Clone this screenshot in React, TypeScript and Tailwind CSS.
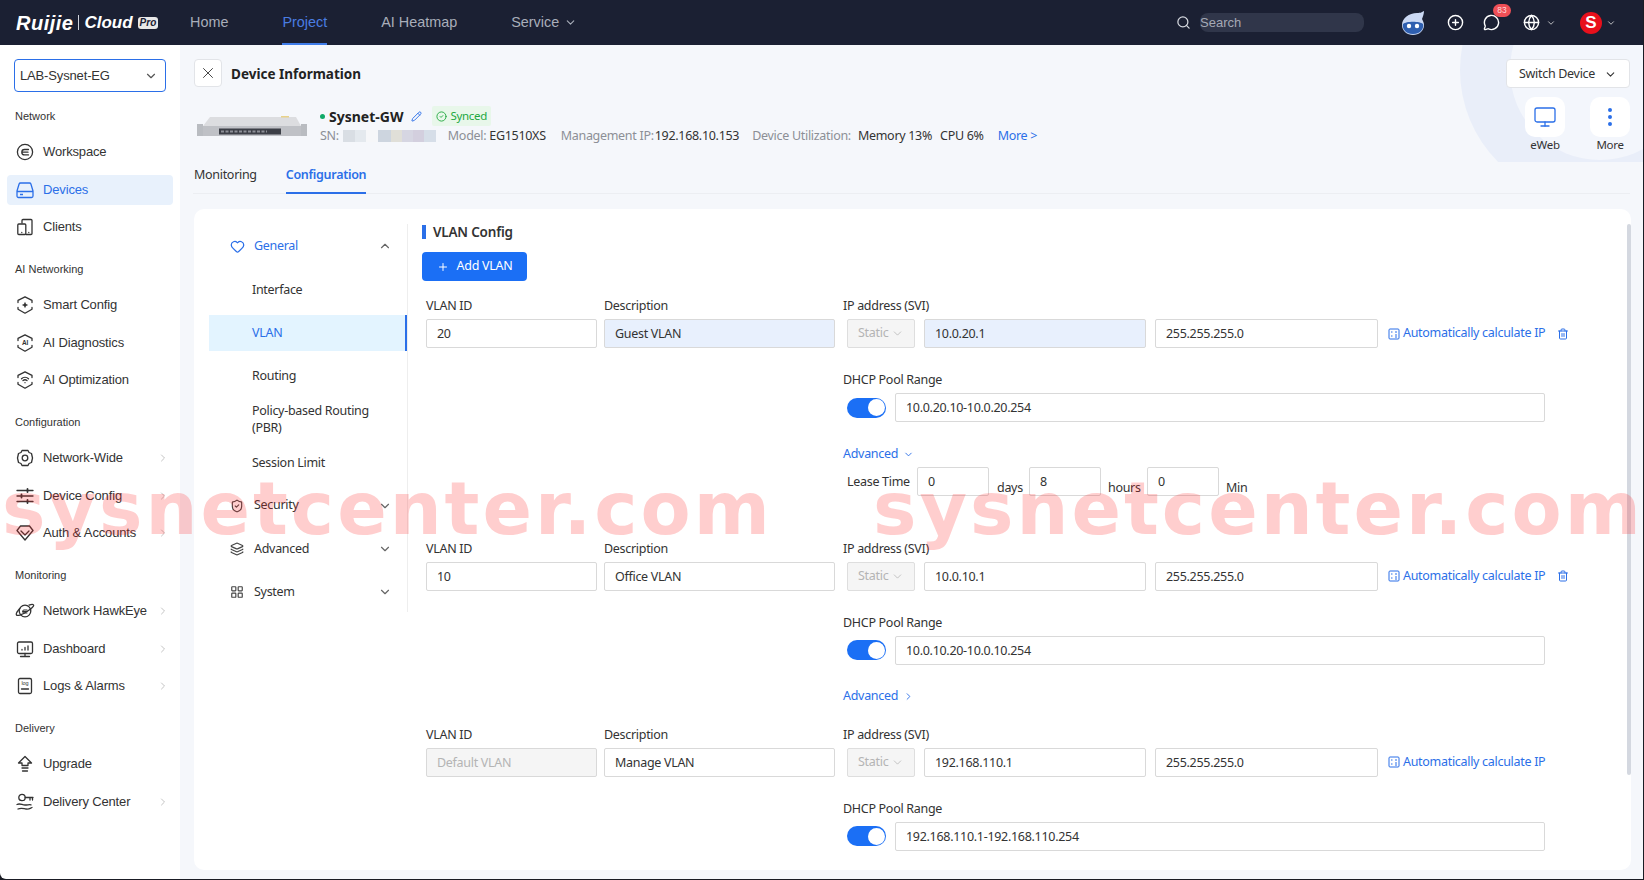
import React from "react";
import { X, ChevronDown, ChevronUp, ChevronRight, Search, Plus, Pencil, Trash2, EllipsisVertical, Monitor, CircleCheck, Heart, ShieldCheck, Layers, LayoutGrid, Globe, MessageCircle, CirclePlus } from "lucide-react";

const S = ({ children }: { children: React.ReactNode }) => (
  <svg viewBox="0 0 20 20" width="20" height="20" fill="none" stroke="#333" strokeWidth="1.3" strokeLinecap="round" strokeLinejoin="round">{children}</svg>
);
const Hex = () => <path d="M3 7.500V5.400l7-3.600 7 3.600v2.100M3 12.500v1.700l7 4 7-4v-1.700" />;
const icons: Record<string, React.ReactNode> = {
  Workspace: <S><circle cx="10" cy="10" r="7.600" /><path d="M13.500 7.500H9.500a2.700 2.700 0 0 0 0 5.400h4M7 10.200h6" /></S>,
  Devices: <svg viewBox="0 0 20 20" width="20" height="20" fill="none" stroke="#2b6fe8" strokeWidth="1.300" strokeLinejoin="round"><path d="M5.500 3h9a1.500 1.500 0 0 1 1.400 1L18 11v5a1.500 1.500 0 0 1-1.500 1.500h-13A1.500 1.500 0 0 1 2 16v-5l2.100-7a1.500 1.500 0 0 1 1.400-1zM2 11.500h16M5 14.500h3" /></svg>,
  Clients: <S><path d="M7 6V3.500A1 1 0 0 1 8 2.500h8a1 1 0 0 1 1 1v13a1 1 0 0 1-1 1h-5" /><rect x="2.800" y="7" width="8" height="10.500" rx="1" /><path d="M6.800 15.400v.2M13.800 15.400v.2" /></S>,
  "Smart Config": <S><Hex /><path d="M10 6.800l1 2.200 2.200 1-2.200 1-1 2.200-1-2.200-2.200-1 2.200-1z" fill="#333" stroke="none" /></S>,
  "AI Diagnostics": <S><Hex /><text x="10" y="12.300" fontSize="6.500" textAnchor="middle" fill="#333" stroke="none" fontFamily="Liberation Sans" fontWeight="700">AI</text></S>,
  "AI Optimization": <S><Hex /><path d="M6.500 8.800a5 5 0 0 1 7 0M8 10.600a3 3 0 0 1 4 0M10 12.600v.1" /></S>,
  "Network-Wide": <S><path d="M7 2.500h6l1 2 2.500 1 1 4.500-1 4.500-2.500 1-1 2H7l-1-2-2.500-1-1-4.500 1-4.500L6 4.500z" /><circle cx="10" cy="10" r="2.800" /></S>,
  "Device Config": <S><path d="M2 4.500h16M2 10h16M2 15.500h16" /><path d="M12.500 3v3M6.500 8.500v3M12.500 14v3" strokeWidth="1.800" /></S>,
  "Auth & Accounts": <S><path d="M5.500 3h9L18 7.500 10 17 2 7.500z" /><path d="M6 8l4 4 4-4" /></S>,
  "Network HawkEye": <S><circle cx="10" cy="10" r="5.800" /><path d="M4.800 7.500C2.500 10 .8 13 1.500 14c1 1.300 6-.4 10.500-3.500S19.500 5 18.500 3.800c-.6-.8-2.500-.5-4.500.3" /><path d="M12 9H9a1.300 1.300 0 0 0 0 3h3M7.800 10.500H12" strokeWidth="1" /></S>,
  Dashboard: <S><rect x="2.500" y="3" width="15" height="11.500" rx="1.500" /><path d="M10 14.500v3M5.500 17.500h9M7 11v-.500M10 11V8.500M13 11V7" /></S>,
  "Logs & Alarms": <S><rect x="3.500" y="2.500" width="13" height="15" rx="1.500" /><text x="10" y="9" fontSize="5.500" textAnchor="middle" fill="#333" stroke="none" fontFamily="Liberation Sans">log</text><path d="M6.500 13h7" /></S>,
  Upgrade: <S><path d="M10 2.500L16.500 9H13v2.500H7V9H3.500z" /><path d="M7 14h6M7.500 17h5" /></S>,
  "Delivery Center": <S><circle cx="7" cy="5.500" r="3.200" /><path d="M10.200 5.500H18M15 5.500v2.500M17.500 5.500V8" /><path d="M2 12.500c3-1.500 5 .5 8 .5s4-.6 6-.2M3 17c3-1.500 5-.5 8 0s4-.6 6-1.500" /></S>,
};

function NavItem({ name, active, arrow }: { name: string; active?: boolean; arrow?: boolean }) {
  return (
    <div className={`mx-[7px] mb-[7.500px] flex h-[30px] items-center rounded-[4px] pl-[8px] pr-[4px] ${active ? "bg-[#e8f1fc] text-[#2b6fe8]" : "text-[#333]"}`}>
      <span className="mr-[8px] flex w-[20px] shrink-0 justify-center">{icons[name]}</span>
      <span className="flex-1">{name}</span>
      {arrow && <ChevronRight size={12} color="#c4c4c4" />}
    </div>
  );
}

function NavGroup({ label, items }: { label: string; items: [string, boolean?][] }) {
  return (
    <div className="mb-[19px]">
      <div className="mb-[13px] h-[16px] pl-[15px] text-[11px] leading-[16px] tracking-normal text-[#333]">{label}</div>
      {items.map(([n, a]) => <NavItem key={n} name={n} arrow={a} active={n === "Devices"} />)}
    </div>
  );
}

function Sidebar() {
  return (
    <aside className="w-[180px] shrink-0 bg-white pt-[14px] font-['Liberation_Sans',sans-serif] text-[13px] tracking-[-0.15px]">
      <div className="mx-[14px] mb-[16px] flex h-[33px] items-center justify-between rounded-[4px] border border-[#2b6fe8] px-[5px] text-[#333]">
        <span>LAB-Sysnet-EG</span>
        <ChevronDown size={14} className="mr-[2px]" color="#555" />
      </div>
      <NavGroup label="Network" items={[["Workspace"], ["Devices"], ["Clients"]]} />
      <NavGroup label="AI Networking" items={[["Smart Config"], ["AI Diagnostics"], ["AI Optimization"]]} />
      <NavGroup label="Configuration" items={[["Network-Wide", true], ["Device Config", true], ["Auth & Accounts", true]]} />
      <NavGroup label="Monitoring" items={[["Network HawkEye", true], ["Dashboard", true], ["Logs & Alarms", true]]} />
      <NavGroup label="Delivery" items={[["Upgrade"], ["Delivery Center", true]]} />
    </aside>
  );
}

function TopBar() {
  return (
    <header className="flex h-[45px] shrink-0 items-center bg-[#1b2033] font-['Liberation_Sans',sans-serif] text-[14.400px] text-[#a9aeba]">
      <div className="flex w-[190px] shrink-0 items-center pl-[16px] text-white">
        <span className="text-[20px] font-bold italic leading-none tracking-[0.5px]">Ruijie</span>
        <span className="mx-[5px] h-[15px] w-px bg-[#cfd2da]" />
        <span className="text-[17px] font-bold italic leading-none">Cloud</span>
        <span className="ml-[5px] rounded-[3px] bg-[#e8e8e8] px-[2px] text-[10px] font-bold italic leading-[12px] text-[#1b2033]">Pro</span>
      </div>
      <nav className="flex h-full items-center">
        <span>Home</span>
        <span className="relative ml-[54px] flex h-full items-center text-[#4a7de2]">
          Project
          <span className="absolute bottom-0 left-0 right-0 h-[2px] bg-[#3f7ce8]" />
        </span>
        <span className="ml-[54px]">AI Heatmap</span>
        <span className="ml-[54px] flex items-center gap-[5px]">Service <ChevronDown size={13} /></span>
      </nav>
      <div className="ml-auto flex h-full items-center pr-[27px]">
        <Search size={15} className="mr-[9px] text-[#d5d8df]" />
        <div className="flex h-[19px] w-[164px] items-center rounded-[8px] bg-[#30364a] text-[13px] text-[#a5a9b5]">Search</div>
        <svg viewBox="0 0 26 26" width="26" height="26" className="ml-[36px]">
          <path d="M24 1c-2 1-3 2-7 2C9 3 2 8 2 15c0 6 5 10 11 10s11-4 11-10c0-2-1-4-2-6 1-3 2-5 2-8z" fill="#cbd9f4" />
          <path d="M3 14c3-3 17-3 20 0 1 4-2 10-10 10S2 18 3 14z" fill="#2f5fb0" />
          <circle cx="9" cy="16" r="2.200" fill="#fff" /><circle cx="17" cy="16" r="2.200" fill="#fff" />
        </svg>
        <CirclePlus size={17} color="#fff" className="ml-[21px]" />
        <span className="relative ml-[19px] flex">
          <MessageCircle size={17} color="#fff" />
          <span className="absolute left-[10px] top-[-10px] h-[13px] w-[18px] rounded-full bg-[#ef4f56] text-center text-[8.500px] leading-[13px] text-[#ffd9d9]">83</span>
        </span>
        <Globe size={17} color="#fff" className="ml-[23px]" />
        <ChevronDown size={10} color="#ddd" className="ml-[6px]" />
        <span className="ml-[24px] flex h-[22px] w-[22px] items-center justify-center rounded-full bg-[#e8101c] text-[17px] font-bold leading-none text-white">S</span>
        <ChevronDown size={10} color="#ddd" className="ml-[4px]" />
      </div>
    </header>
  );
}

function MenuRow({ label, icon, open, active }: { label: string; icon: React.ReactNode; open?: boolean; active?: boolean }) {
  return (
    <div className={`flex h-[36px] items-center pl-[20px] pr-[15px] ${active ? "text-[#2b6fe8]" : "text-[#333]"}`}>
      <span className="mr-[9px] flex w-[16px] justify-center">{icon}</span>
      <span className="flex-1">{label}</span>
      {open ? <ChevronUp size={14} color="#666" /> : <ChevronDown size={14} color="#666" />}
    </div>
  );
}

const Sub = ({ children, active }: { children: React.ReactNode; active?: boolean }) => (
  <div className={`flex min-h-[36px] items-center pl-[43px] leading-[17px] ${active ? "border-r-[2.500px] border-[#2b6fe8] bg-[#e3f4ff] text-[#2b6fe8]" : "text-[#333]"}`}>
    <span className="w-[140px]">{children}</span>
  </div>
);

function Menu() {
  return (
    <div className="ml-[15px] mt-[15px] flex h-[388px] w-[199px] shrink-0 flex-col gap-[7.300px] border-r border-[#eeeeee] pt-[4px] text-[12.500px]">
      <MenuRow label="General" open active icon={<Heart size={15} color="#2b6fe8" />} />
      <Sub>Interface</Sub>
      <Sub active>VLAN</Sub>
      <Sub>Routing</Sub>
      <Sub>Policy-based Routing (PBR)</Sub>
      <Sub>Session Limit</Sub>
      <MenuRow label="Security" icon={<ShieldCheck size={14} color="#444" />} />
      <MenuRow label="Advanced" icon={<Layers size={14} color="#444" />} />
      <MenuRow label="System" icon={<LayoutGrid size={14} color="#444" />} />
    </div>
  );
}

const inputCls = "block h-[29px] rounded-[2px] border border-[#d9d9d9] px-[10px] text-[12.500px] text-[#333] outline-none";

function Field({ value, w, tone }: { value: string; w: string; tone?: "blue" | "off" }) {
  const t = tone === "blue" ? "bg-[#e8f0fd]" : tone === "off" ? "bg-[#f5f5f5] text-[#b4b4b4]" : "bg-white";
  return <input readOnly value={value} className={`${inputCls} ${w} ${t}`} />;
}

const Label = ({ children }: { children: React.ReactNode }) => (
  <div className="mb-[6px] h-[16px] text-[12.500px] leading-[18px] text-[#333]">{children}</div>
);

function Toggle() {
  return (
    <span className="flex h-[20px] w-[39px] shrink-0 items-center justify-end rounded-full bg-[#1b6ff5] pr-[1px]">
      <span className="h-[17px] w-[17px] rounded-full bg-white" />
    </span>
  );
}

const CalcIcon = () => (
  <svg viewBox="0 0 12 12" width="12" height="12" fill="none" stroke="#2b6fe8" strokeWidth="1" className="mr-[3px]">
    <rect x="1" y="1" width="10" height="10" rx="1" />
    <path d="M3 4h1.500M7 4h2M3 8h1.500M7 7h2M7 9h2" />
  </svg>
);

function Block({ id, desc, ip, pool, mt, trash, idOff, blue, adv, open }: { id: string; desc: string; ip: string; pool: string; mt: string; trash?: boolean; idOff?: boolean; blue?: boolean; adv?: boolean; open?: boolean }) {
  return (
    <section className={`${mt} flex pl-[4px]`}>
      <div className="w-[178px] shrink-0">
        <Label>VLAN ID</Label>
        <Field value={id} w="w-[171px]" tone={idOff ? "off" : undefined} />
      </div>
      <div className="w-[239px] shrink-0">
        <Label>Description</Label>
        <Field value={desc} w="w-[231px]" tone={blue ? "blue" : undefined} />
      </div>
      <div className="flex-1">
        <Label>IP address (SVI)</Label>
        <div className="flex items-center pl-[4px]">
          <span className="mr-[9px] flex h-[29px] w-[68px] shrink-0 items-center justify-between rounded-[2px] border border-[#dedede] bg-[#f5f5f5] px-[10px] text-[12.500px] text-[#b4b4b4]">
            Static <ChevronDown size={13} strokeWidth={1} color="#999" />
          </span>
          <Field value={ip} w="w-[222px] mr-[9px]" tone={blue ? "blue" : undefined} />
          <Field value="255.255.255.0" w="w-[223px]" />
          <span className="ml-[10px] flex items-center whitespace-nowrap text-[12.500px] text-[#2b6fe8]">
            <CalcIcon />Automatically calculate IP
          </span>
          {trash && <Trash2 size={12} color="#2b6fe8" className="ml-[12px]" />}
        </div>
        <div className="mt-[23px]"><Label>DHCP Pool Range</Label></div>
        <div className="flex items-center pl-[4px]">
          <Toggle />
          <Field value={pool} w="ml-[9px] w-[650px]" />
        </div>
        {adv && (
          <div className="mt-[24px] flex h-[16px] items-center gap-[5px] text-[12.500px] text-[#2b6fe8]">
            Advanced {open ? <ChevronDown size={11} /> : <ChevronRight size={11} />}
          </div>
        )}
        {open && (
          <div className="mt-[5px] flex pl-[4px] text-[12.500px] text-[#333]">
            <span className="w-[70px] pt-[6px]">Lease Time</span>
            <Field value="0" w="w-[72px]" />
            <span className="w-[40px] pl-[8px] pt-[12px]">days</span>
            <Field value="8" w="w-[72px]" />
            <span className="w-[46px] pl-[7px] pt-[12px]">hours</span>
            <Field value="0" w="w-[72px]" />
            <span className="pl-[7px] pt-[12px]">Min</span>
          </div>
        )}
      </div>
    </section>
  );
}

function DeviceImage() {
  return (
    <svg viewBox="0 0 110 24" width="110" height="24" className="shrink-0">
      <rect x="0" y="10" width="6" height="12" fill="#b9bcc1" />
      <rect x="104" y="10" width="6" height="12" fill="#b9bcc1" />
      <path d="M13 3h86l5 9v9H6v-9z" fill="#dcdde0" />
      <rect x="6" y="12" width="98" height="10" fill="#bfc1c6" />
      <rect x="22" y="14.500" width="62" height="6" fill="#3c3f47" />
      <path d="M24 17.500h46" stroke="#8d9098" strokeWidth="2" strokeDasharray="3 1.500" />
      <rect x="84" y="2" width="8" height="1.500" fill="#e8d28a" />
    </svg>
  );
}

function DeviceHead() {
  return (
    <div className="flex justify-between pl-[14px] pr-[13px] pt-[14px]">
      <div className="min-w-0 flex-1">
        <div className="flex h-[28px] items-center">
          <span className="flex h-[28px] w-[28px] items-center justify-center rounded-[4px] border border-[#e2e4e8] bg-white"><X size={18} strokeWidth={1.200} color="#333" /></span>
          <span className="ml-[9px] pt-[2px] text-[13.500px] font-bold tracking-normal text-[#222]">Device Information</span>
        </div>
        <div className="ml-[3px] mt-[19px] flex h-[40px] items-center">
          <DeviceImage />
          <div className="ml-[13px] text-[12.500px] text-[#8c8f96]">
            <div className="flex h-[20px] items-center">
              <span className="mr-[3px] h-[5px] w-[5px] rounded-full bg-[#0fa968]" />
              <span className="ml-[1px] text-[14px] font-bold tracking-normal text-[#222]">Sysnet-GW</span>
              <Pencil size={11} color="#2b6fe8" className="ml-[8px]" />
              <span className="ml-[10px] flex h-[20px] items-center gap-[3px] rounded-[2px] bg-[#e8f7ea] px-[4px] text-[11.500px] text-[#22a83f]"><CircleCheck size={11} />Synced</span>
            </div>
            <div className="flex h-[20px] items-center whitespace-nowrap">
              <span>SN:</span>
              <span className="ml-[4px] flex h-[12px] w-[93px]">
                <i className="w-[12px] bg-[#d9dee4]" /><i className="w-[11px] bg-[#e4e9ee]" /><i className="w-[12px] bg-[#f6f7f9]" /><i className="w-[13px] bg-[#cdd5df]" /><i className="w-[11px] bg-[#e0dfd8]" /><i className="w-[11px] bg-[#d6d6e2]" /><i className="w-[11px] bg-[#d3cfde]" /><i className="w-[12px] bg-[#d6dee8]" />
              </span>
              <span className="ml-[12px]">Model:</span><span className="ml-[3px] text-[#333]">EG1510XS</span>
              <span className="ml-[15px]">Management IP:</span><span className="ml-[1px] text-[#333]">192.168.10.153</span>
              <span className="ml-[13px]">Device Utilization:</span><span className="ml-[7px] text-[#333]">Memory 13%</span><span className="ml-[8px] text-[#333]">CPU 6%</span>
              <span className="ml-[14px] text-[#2b6fe8]">More &gt;</span>
            </div>
          </div>
        </div>
      </div>
      <div className="relative flex w-[124px] shrink-0 flex-col items-end">
        <button className="flex h-[29px] w-[124px] items-center justify-center gap-[9px] rounded-[4px] border border-[#e2e4e8] bg-white pt-[2px] text-[12.500px] text-[#333]">Switch Device <ChevronDown size={13} /></button>
        <div className="mt-[9px] flex gap-[25px] text-center text-[11.500px] leading-[16px] text-[#333]">
          <div className="w-[40px]">
            <span className="flex h-[40px] w-[40px] items-center justify-center rounded-[10px] bg-white"><Monitor size={24} strokeWidth={1.300} color="#2b6fe8" /></span>
            <div>eWeb</div>
          </div>
          <div className="w-[40px]">
            <span className="flex h-[40px] w-[40px] items-center justify-center rounded-[10px] bg-white"><EllipsisVertical size={24} color="#2b6fe8" /></span>
            <div>More</div>
          </div>
        </div>
      </div>
    </div>
  );
}

function Tabs() {
  return (
    <div className="mx-[13px] mt-[7px] flex h-[34px] border-b border-[#eceef2] text-[12.500px]">
      <span className="ml-[1px] text-[#333] leading-[30px]">Monitoring</span>
      <span className="relative ml-[29px] font-semibold leading-[30px] text-[#2b6fe8]">
        Configuration
        <span className="absolute bottom-[-1px] left-0 right-0 h-[2px] bg-[#2b6fe8]" />
      </span>
    </div>
  );
}

export default function App() {
  return (
    <div className="relative h-[880px] w-[1644px] overflow-hidden bg-[#1a1c24]">
      <div className="flex h-[879px] w-[1643px] flex-col overflow-hidden rounded-bl-[6px] font-['Noto_Sans',sans-serif]">
        <TopBar />
        <div className="flex min-h-0 flex-1">
          <Sidebar />
          <main className="relative min-w-0 flex-1 overflow-hidden bg-[#f5f7fb] tracking-[-0.3px]">
            <div className="absolute right-0 top-0 h-[117px] w-[190px] overflow-hidden">
              <div className="absolute left-[7px] top-[-105px] h-[260px] w-[260px] rounded-full bg-[#e9eef9]" />
              <div className="absolute left-[57px] top-[-65px] h-[180px] w-[180px] rounded-full bg-[#f3f6fc]" />
            </div>
            <div className="relative">
              <DeviceHead />
              <Tabs />
              <div className="relative ml-[14px] mt-[15px] flex h-[661px] w-[1437px] overflow-hidden rounded-[10px] bg-white">
                <Menu />
                <div className="ml-[14px] min-w-0 flex-1 pt-[16px]">
                  <div className="flex h-[14px] items-center border-l-[4px] border-[#2b6fe8] pl-[7px] text-[13.500px] font-semibold tracking-[-0.2px] text-[#333]">VLAN Config</div>
                  <button className="mt-[13px] flex h-[29px] w-[105px] items-center justify-center gap-[8px] rounded-[4px] bg-[#1b6ff5] text-[12.500px] text-white"><Plus size={12} />Add VLAN</button>
                  <Block mt="mt-[16px]" id="20" desc="Guest VLAN" ip="10.0.20.1" pool="10.0.20.10-10.0.20.254" trash blue adv open />
                  <Block mt="mt-[42px]" id="10" desc="Office VLAN" ip="10.0.10.1" pool="10.0.10.20-10.0.10.254" trash adv />
                  <Block mt="mt-[21px]" id="Default VLAN" desc="Manage VLAN" ip="192.168.110.1" pool="192.168.110.1-192.168.110.254" idOff />
                </div>
                <span className="absolute right-0 top-[15px] h-[551px] w-[4px] rounded-[2px] bg-[#d4d8e0]" />
              </div>
            </div>
          </main>
        </div>
      </div>
      <div className="pointer-events-none absolute left-0 right-0 top-[464px] flex h-[90px] items-center overflow-hidden whitespace-nowrap font-['DejaVu_Sans',sans-serif] text-[73px] font-bold leading-[90px] tracking-[3px] text-[#ff2020]/[0.22]">
        <span className="w-[873px] shrink-0 pl-[2px]">sysnetcenter.com</span>
        <span className="shrink-0">sysnetcenter.com</span>
      </div>
    </div>
  );
}
